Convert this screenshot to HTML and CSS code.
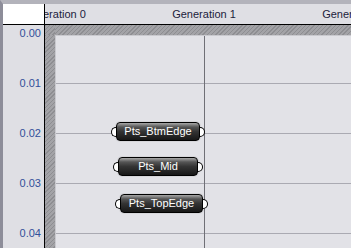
FILE: index.html
```html
<!DOCTYPE html>
<html lang="en">
<head>
    <meta charset="UTF-8">
    <title>Timeline</title>
    <link rel="stylesheet" href="styles.css">
</head>
<body>
    <div class="frame">
        <div class="head">
            <div class="corner"></div>
            <div class="gens">
                <span>Generation 0</span>
                <span>Generation 1</span>
                <span>Generation 2</span>
            </div>
        </div>
        <div class="main">
            <div class="rows">
                <span>0.00</span>
                <span>0.01</span>
                <span>0.02</span>
                <span>0.03</span>
                <span>0.04</span>
            </div>
            <div class="canvas">
                <div class="hatch"></div>
                <div class="hatch"></div>
                <div class="hatch"></div>
                <div class="field">
                    <div class="node node-btm">Pts_BtmEdge</div>
                    <div class="node node-mid">Pts_Mid</div>
                    <div class="node node-top">Pts_TopEdge</div>
                </div>
            </div>
        </div>
    </div>
</body>
</html>
```

FILE: styles.css
```css
html, body {
    margin: 0;
    height: 100%;
    overflow: hidden;
}

body {
    font-family: 'Liberation Sans', Arial, sans-serif;
    font-size: 11px;
    background: #e2e2e7;
}

.frame {
    height: 100%;
    display: flex;
    flex-direction: column;
    border-top: 4px solid #b3b3bb;
    border-left: 3px solid #8d8d99;
    box-sizing: border-box;
}

.head {
    display: flex;
    height: 20px;
    border-bottom: 1px solid #000;
    background: #dfdfe4;
    flex-shrink: 0;
}

.corner {
    width: 41px;
    background: #fff;
    border-right: 1px solid #000;
}

.gens {
    flex: 1;
    display: flex;
    overflow: hidden;
    color: #1c1c3c;
}

.gens span {
    flex: 0 0 150px;
    text-align: center;
    line-height: 20px;
}

.gens span:first-child {
    margin-left: -66px;
}

.main {
    flex: 1;
    display: flex;
    min-height: 0;
}

.rows {
    width: 41px;
    border-right: 1px solid #000;
    background: #dfdfe4;
    display: flex;
    flex-direction: column;
    overflow: hidden;
    color: #32509a;
}

.rows span {
    flex: 0 0 50px;
    line-height: 50px;
    text-align: right;
    padding-right: 3px;
}

.rows span:first-child {
    margin-top: -17px;
}

.canvas {
    flex: 1;
    display: grid;
    grid-template-columns: 10px 1fr;
    grid-template-rows: 10px 1fr;
}

.hatch {
    background: repeating-linear-gradient(135deg, #8e8e92 0 1px, #a3a3a7 1px 3px);
}

.field {
    position: relative;
    border-left: 1px solid #c9c9ce;
    border-top: 1px solid #c9c9ce;
    background-color: #e2e2e7;
    background-image:
        linear-gradient(to right, #6f6f76 1px, transparent 1px),
        linear-gradient(to bottom, #aaaab2 1px, transparent 1px);
    background-size: 150px 100%, 100% 50px;
    background-position: 148px 0, 0 47px;
}

/* component capsules */
.node {
    position: absolute;
    height: 17px;
    line-height: 17px;
    padding: 0 7px;
    color: #fff;
    text-align: center;
    border: 1px solid #000;
    border-radius: 4px;
    background: linear-gradient(#a8a8a8 0, #555 4px, #343434 50%, #171717 100%);
    box-shadow: 0 0 0 1px #d6d6da;
}

.node::before,
.node::after {
    content: '';
    position: absolute;
    top: 4px;
    width: 4px;
    height: 8px;
    background: #fff;
    border: 1px solid #000;
}

.node::before {
    left: -6px;
    border-radius: 5px 0 0 5px;
    border-right: none;
}

.node::after {
    right: -6px;
    border-radius: 0 5px 5px 0;
    border-left: none;
}

.node-btm {
    left: 60px;
    top: 86px;
    width: 68px;
}

.node-mid {
    left: 62px;
    top: 121px;
    width: 64px;
}

.node-top {
    left: 64px;
    top: 158px;
    width: 67px;
}
```
